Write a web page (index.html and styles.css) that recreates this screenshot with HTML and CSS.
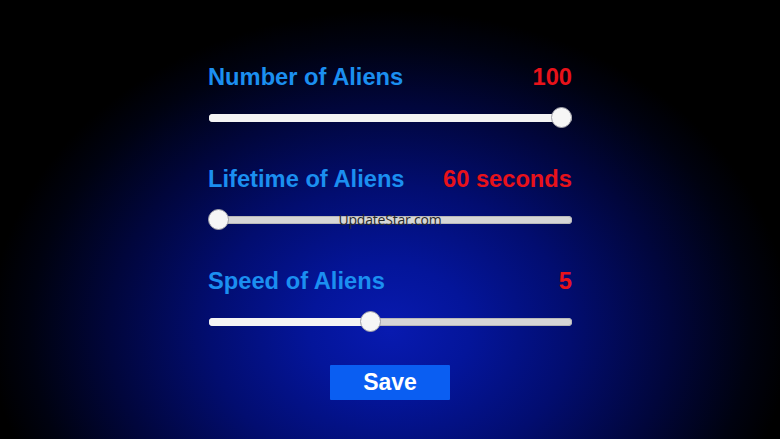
FILE: index.html
```html
<!DOCTYPE html>
<html>
<head>
<meta charset="utf-8">
<link rel="stylesheet" href="styles.css">
</head>
<body>
<div class="screen">
  <div class="panel">
    <div class="setting">
      <div class="head"><span class="label">Number of Aliens</span><span class="value">100</span></div>
      <div class="slider">
        <div class="track"><div class="fill" style="width: calc(100% - 10px)"></div></div>
        <div class="thumb" style="left: calc(100% - 21px)"></div>
      </div>
    </div>
    <div class="setting">
      <div class="head"><span class="label">Lifetime of Aliens</span><span class="value">60 seconds</span></div>
      <div class="slider">
        <div class="track"><div class="fill" style="width: 10px"></div></div>
        <div class="thumb" style="left: 0"></div>
      </div>
    </div>
    <div class="setting">
      <div class="head"><span class="label">Speed of Aliens</span><span class="value">5</span></div>
      <div class="slider">
        <div class="track"><div class="fill" style="width: calc((100% - 21px) * 0.4444 + 10px)"></div></div>
        <div class="thumb" style="left: calc((100% - 21px) * 0.4444)"></div>
      </div>
    </div>
    <div class="actions"><button class="save">Save</button></div>
  </div>
  <div class="watermark">UpdateStar.com</div>
</div>
</body>
</html>
```

FILE: styles.css
```css
html, body {
  margin: 0;
  padding: 0;
  width: 780px;
  height: 439px;
  overflow: hidden;
}
.screen {
  position: relative;
  width: 780px;
  height: 439px;
  background: radial-gradient(ellipse 400px 320px at 390px 330px, #081ab0 0%, #04159a 20%, #020d70 45%, #01063c 70%, #000210 90%, #000 100%);
  font-family: "Liberation Sans", Arial, sans-serif;
}
.panel {
  width: 364px;
  margin: 0 auto;
  padding-top: 63px;
  display: flex;
  flex-direction: column;
}
.setting {
  display: flex;
  flex-direction: column;
  gap: 16px;
  margin-bottom: 36px;
}
.head {
  display: flex;
  justify-content: space-between;
  align-items: center;
  height: 28px;
  line-height: 28px;
  font-size: 23.7px;
  font-weight: bold;
}
.label { color: #1b8ff0; }
.value { color: #e8121a; }
.slider {
  position: relative;
  height: 22px;
  display: flex;
  align-items: center;
}
.track {
  flex: 1;
  height: 8px;
  margin-left: 1px;
  border-radius: 4px;
  background: #d6d6d6;
  box-shadow: inset 0 0 0 1px #b8b8b8;
  overflow: hidden;
}
.fill {
  height: 100%;
  background: #f4f4f4;
}
.thumb {
  position: absolute;
  top: 0;
  width: 21px;
  height: 21px;
  box-sizing: border-box;
  border-radius: 50%;
  background: #f6f6f6;
  border: 1px solid #a0a0a8;
}
.actions {
  display: flex;
  justify-content: center;
  margin-top: -4px;
}
.save {
  width: 120px;
  height: 35px;
  border: none;
  border-radius: 1px;
  background: #0a5ef2;
  color: #fff;
  font-family: "Liberation Sans", Arial, sans-serif;
  font-weight: bold;
  font-size: 23px;
  padding: 0;
}
.watermark {
  position: absolute;
  left: 0;
  right: 0;
  top: 210px;
  text-align: center;
  font-family: "Open Sans", "DejaVu Sans", sans-serif;
  font-size: 14px;
  letter-spacing: -0.2px;
  color: #2a2a2a;
}
```
